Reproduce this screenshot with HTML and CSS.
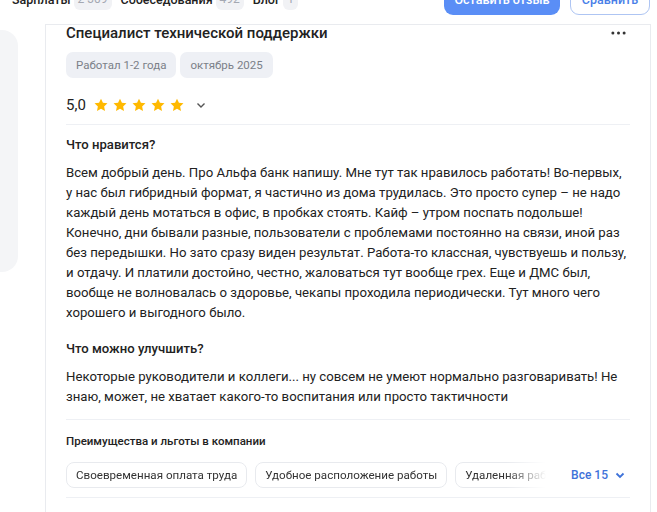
FILE: index.html
```html
<!DOCTYPE html>
<html lang="ru">
<head>
    <meta charset="UTF-8">
    <meta name="viewport" content="width=device-width, initial-scale=1.0">
    <title>Отзыв</title>
    <link rel="stylesheet" href="styles.css">
</head>
<body>
    <div class="topbar">
        <nav class="tabs">
            <a class="tab">Зарплаты <span class="count">2 309</span></a>
            <a class="tab">Собеседования <span class="count">492</span></a>
            <a class="tab">Блог <span class="count">1</span></a>
        </nav>
        <div class="actions">
            <button type="button" class="btn btn-primary">Оставить отзыв</button>
            <button type="button" class="btn btn-outline">Сравнить</button>
        </div>
    </div>

    <div class="layout">
        <aside class="side-card"></aside>

        <article class="review">
            <div class="review-head">
                <h1>Специалист технической поддержки</h1>
                <svg class="more" viewBox="0 0 16 4"><circle cx="2" cy="2" r="1.6"/><circle cx="8" cy="2" r="1.6"/><circle cx="14" cy="2" r="1.6"/></svg>
            </div>

            <div class="tags">
                <span class="tag">Работал 1-2 года</span>
                <span class="tag">октябрь 2025</span>
            </div>

            <div class="rating">
                <span class="score">5,0</span>
                <span class="stars">
                    <svg viewBox="0 0 24 24"><path d="M12 2.5l2.9 6.2 6.8.8-5 4.7 1.3 6.7L12 17.6l-6 3.3 1.3-6.7-5-4.7 6.8-.8z"/></svg>
                    <svg viewBox="0 0 24 24"><path d="M12 2.5l2.9 6.2 6.8.8-5 4.7 1.3 6.7L12 17.6l-6 3.3 1.3-6.7-5-4.7 6.8-.8z"/></svg>
                    <svg viewBox="0 0 24 24"><path d="M12 2.5l2.9 6.2 6.8.8-5 4.7 1.3 6.7L12 17.6l-6 3.3 1.3-6.7-5-4.7 6.8-.8z"/></svg>
                    <svg viewBox="0 0 24 24"><path d="M12 2.5l2.9 6.2 6.8.8-5 4.7 1.3 6.7L12 17.6l-6 3.3 1.3-6.7-5-4.7 6.8-.8z"/></svg>
                    <svg viewBox="0 0 24 24"><path d="M12 2.5l2.9 6.2 6.8.8-5 4.7 1.3 6.7L12 17.6l-6 3.3 1.3-6.7-5-4.7 6.8-.8z"/></svg>
                </span>
                <svg class="chevron" viewBox="0 0 12 12"><path d="M2.5 4.5L6 8l3.5-3.5"/></svg>
            </div>

            <hr class="divider">

            <h2>Что нравится?</h2>
            <p>Всем добрый день. Про Альфа банк напишу. Мне тут так нравилось работать! Во-первых, у нас был гибридный формат, я частично из дома трудилась. Это просто супер – не надо каждый день мотаться в офис, в пробках стоять. Кайф – утром поспать подольше! Конечно, дни бывали разные, пользователи с проблемами постоянно на связи, иной раз без передышки. Но зато сразу виден результат. Работа-то классная, чувствуешь и пользу, и отдачу. И платили достойно, честно, жаловаться тут вообще грех. Еще и ДМС был, вообще не волновалась о здоровье, чекапы проходила периодически. Тут много чего хорошего и выгодного было.</p>

            <h2 class="second">Что можно улучшить?</h2>
            <p>Некоторые руководители и коллеги... ну совсем не умеют нормально разговаривать! Не знаю, может, не хватает какого-то воспитания или просто тактичности</p>

            <hr class="divider divider-low">

            <h3>Преимущества и льготы в компании</h3>
            <div class="perks">
                <div class="chips">
                    <span class="chip">Своевременная оплата труда</span>
                    <span class="chip">Удобное расположение работы</span>
                    <span class="chip">Удаленная работа</span>
                    <span class="chip">ДМС</span>
                </div>
                <a class="show-all">Все 15
                    <svg viewBox="0 0 12 12"><path d="M2.5 4.5L6 8l3.5-3.5"/></svg>
                </a>
            </div>

            <hr class="divider">
        </article>
    </div>
</body>
</html>
```

FILE: styles.css
```css
body {
    margin: 0;
    font-family: Roboto, "Noto Sans", sans-serif;
    color: #1f1f1f;
    background-color: #fff;
    overflow: hidden;
}

.topbar {
    display: flex;
    justify-content: space-between;
    align-items: center;
    height: 40px;
    margin-top: -25px;
    padding: 0 7px 0 12px;
}

.tabs {
    display: flex;
    align-items: center;
    gap: 9px;
    padding-top: 8px;
}

.tab {
    display: flex;
    align-items: center;
    gap: 3px;
    font-size: 12.5px;
    font-weight: 500;
    color: #222;
}

.count {
    background-color: #f1f2f5;
    color: #a4a8b2;
    font-size: 12px;
    font-weight: 400;
    border-radius: 6px;
    padding: 0 4px;
    line-height: 22px;
}

.actions {
    display: flex;
    gap: 10px;
}

.btn {
    height: 40px;
    border-radius: 9px;
    font-family: inherit;
    font-size: 12.5px;
    font-weight: 500;
    padding: 8px 0 0;
    white-space: nowrap;
    cursor: pointer;
}

.btn-primary {
    width: 116px;
    background-color: #5a8ef6;
    border: none;
    color: #fff;
}

.btn-outline {
    width: 80px;
    background-color: #fff;
    border: 1px solid #aec5f3;
    color: #4a7fe8;
}

.layout {
    display: flex;
    margin-top: 9px;
}

.side-card {
    flex: 0 0 18px;
    height: 242px;
    margin-top: 6px;
    margin-right: 27px;
    background-color: #f4f5f7;
    border-radius: 0 16px 16px 0;
}

.review {
    flex: 0 0 584px;
    border: 1px solid #e9ebef;
    border-bottom: none;
    padding: 0 0 0 20px;
    height: 600px;
}

.review-head {
    display: flex;
    justify-content: space-between;
    align-items: center;
    width: 564px;
}

h1 {
    margin: 0;
    font-size: 15px;
    line-height: 17px;
    font-weight: 500;
    color: #222;
}

.more {
    width: 15px;
    height: 4px;
    fill: #333;
    margin-right: 4px;
    margin-top: -2px;
}

.tags {
    display: flex;
    gap: 4px;
    margin-top: 10px;
}

.tag {
    background-color: #eef0f5;
    color: #7b7f88;
    font-size: 11.5px;
    line-height: 26px;
    padding: 0 10px;
    border-radius: 7px;
}

.rating {
    display: flex;
    align-items: center;
    height: 20px;
    margin-top: 17px;
}

.score {
    font-size: 15px;
    color: #222;
    margin-right: 7px;
}

.stars {
    display: flex;
    gap: 3px;
}

.stars svg {
    width: 16px;
    height: 16px;
    fill: #ffb900;
}

.chevron {
    width: 12px;
    height: 12px;
    margin-left: 10px;
    fill: none;
    stroke: #555;
    stroke-width: 1.4;
}

.divider {
    width: 564px;
    margin: 9px 0 0;
    border: none;
    border-top: 1px solid #eef0f4;
}

.divider-low {
    margin-top: 12px;
}

h2 {
    margin: 10px 0 0;
    font-size: 13.1px;
    line-height: 20px;
    font-weight: 500;
    color: #222;
}

h2.second {
    margin-top: 16px;
}

p {
    width: 564px;
    margin: 8px 0 0;
    font-size: 13.2px;
    line-height: 20px;
    color: #222;
}

h3 {
    margin: 11px 0 0;
    font-size: 11.5px;
    line-height: 20px;
    font-weight: 500;
    color: #222;
}

.perks {
    display: flex;
    align-items: center;
    width: 564px;
    margin-top: 11px;
}

.chips {
    display: flex;
    gap: 8px;
    width: 490px;
    overflow: hidden;
    -webkit-mask-image: linear-gradient(to right, #000 440px, transparent 480px);
    mask-image: linear-gradient(to right, #000 440px, transparent 480px);
}

.chip {
    flex: none;
    border: 1px solid #e8eaee;
    border-radius: 8px;
    padding: 0 9px;
    font-size: 11.6px;
    line-height: 24px;
    color: #333;
}

.show-all {
    display: flex;
    align-items: center;
    gap: 6px;
    margin-left: auto;
    margin-right: 4px;
    font-size: 12px;
    font-weight: 500;
    color: #3e72d9;
}

.show-all svg {
    width: 12px;
    height: 12px;
    fill: none;
    stroke: #3e72d9;
    stroke-width: 1.8;
}
```
